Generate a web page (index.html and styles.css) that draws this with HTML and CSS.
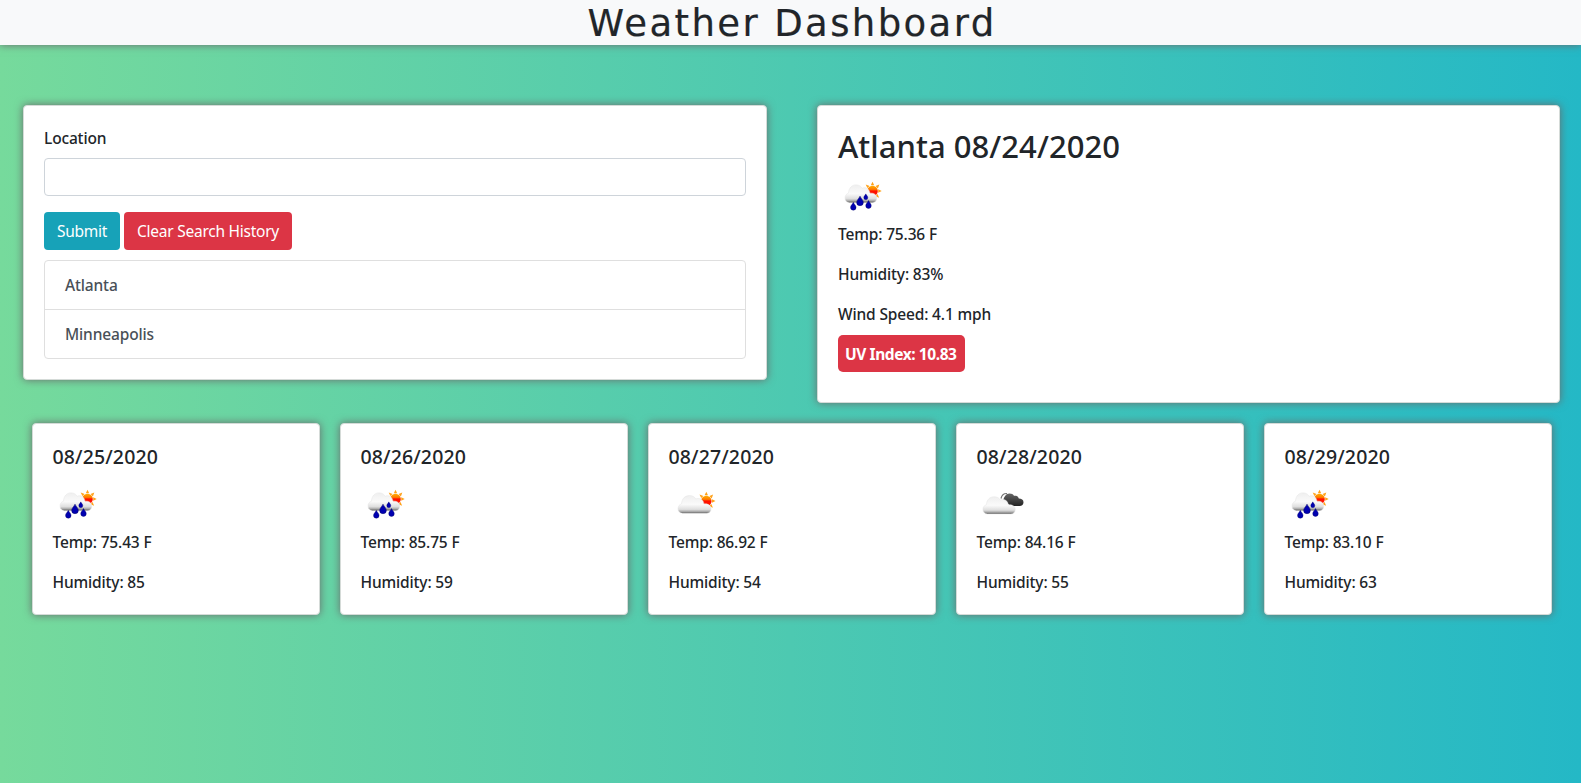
FILE: index.html
```html
<!DOCTYPE html>
<html lang="en">
<head>
<meta charset="utf-8">
<title>Weather Dashboard</title>
<link rel="stylesheet" href="styles.css">
</head>
<body>
<svg class="defs" width="0" height="0" aria-hidden="true">
  <defs>
    <linearGradient id="cloudFill" x1="0" y1="0" x2="0" y2="1">
      <stop offset="0" stop-color="#efefef"/><stop offset=".5" stop-color="#fafafa"/><stop offset=".78" stop-color="#dedede"/><stop offset=".9" stop-color="#aaa"/><stop offset="1" stop-color="#555"/>
    </linearGradient>
    <linearGradient id="darkFill" x1="0" y1="0" x2="0" y2="1">
      <stop offset="0" stop-color="#666"/><stop offset=".5" stop-color="#444"/><stop offset="1" stop-color="#222"/>
    </linearGradient>
    <linearGradient id="sunFill" x1="0" y1="0" x2="0" y2="1">
      <stop offset="0" stop-color="#ffb000"/><stop offset=".35" stop-color="#ff7a00"/><stop offset=".5" stop-color="#ff1000"/><stop offset="1" stop-color="#ff1800"/>
    </linearGradient>
    <g id="sun">
      <path fill="#ffa21a" d="M0-9.200l1.700 3.400h-3.400zM-6.800-6.500l3.900 1.400-2.200 2.200zM6.800-6.500l-1.400 3.900-2.300-2.300zM9.200 0l-3.500 1.800v-3.600zM6.600 6.800l-3.700-1.500 2.200-2.300z"/>
      <circle r="5.300" fill="url(#sunFill)"/>
    </g>
    <path id="cloud" d="M8 29a5 5 0 0 1-4.500-5c0-2.500 1.500-4.300 3.500-4.800C7.500 13.500 10.500 10.500 15 10.500c3 0 5 1.300 6.300 3.500 4-1.500 7.500.5 8.200 5.200 4-.5 7 1.500 7 5 0 3-2 4.800-4.500 4.800z" fill="url(#cloudFill)" stroke="#e4e4e4" stroke-width=".5"/>
    <path id="drop" d="M0-4.200C1-2 2.900-.8 2.900 1.200a2.900 2.900 0 0 1-5.800 0C-2.900-.8-1-2 0-4.200z" fill="#0000b0" stroke="#000060" stroke-width=".4"/>
    <symbol id="rain" viewBox="0 0 50 50">
      <use href="#sun" transform="translate(34.500 18)"/>
      <use href="#cloud" transform="translate(3.700 1.800) scale(.96)"/>
      <use href="#drop" transform="translate(22 28) scale(1.150)"/>
      <use href="#drop" transform="translate(27.800 23.800) scale(.7)"/>
      <use href="#drop" transform="translate(30.500 31.500) scale(.95)"/>
      <use href="#drop" transform="translate(15.300 33.300) scale(.95)"/>
    </symbol>
    <symbol id="partly" viewBox="0 0 50 50">
      <use href="#sun" transform="translate(37.300 20)"/>
      <use href="#cloud" transform="translate(5.500 4.500) scale(1 .96)"/>
    </symbol>
    <symbol id="broken" viewBox="0 0 50 50">
      <path d="M27 21c.3-3 2.500-6.500 6-6.500 2.200 0 3.600.8 4.500 2.300 2.500-.5 4.300.7 4.800 2.700 2.700 0 4.700 1.200 4.700 3.700 0 2-1.500 3.800-4 3.800h-9z" transform="translate(-.5 -2)" fill="url(#darkFill)"/>
      <path d="M24 17.500c.7-3 3-5.200 6-5" fill="none" stroke="#777" stroke-width="1.200"/>
      <use href="#cloud" transform="translate(2.500 6) scale(.98 .93)"/>
    </symbol>
  </defs>
</svg>
<header class="topbar"><h1 class="title">Weather Dashboard</h1></header>
<main>
  <div class="top">
    <section class="card search">
      <label class="label" for="loc">Location</label>
      <input class="field" id="loc" type="text">
      <div class="buttons">
        <button class="btn info">Submit</button>
        <button class="btn danger">Clear Search History</button>
      </div>
      <ul class="history"><li>Atlanta</li><li>Minneapolis</li></ul>
    </section>
    <section class="card current">
      <h2 class="city">Atlanta 08/24/2020</h2>
      <svg class="icon"><use href="#rain"/></svg>
      <p>Temp: 75.36 F</p>
      <p>Humidity: 83%</p>
      <p>Wind Speed: 4.1 mph</p>
      <span class="uv">UV Index: 10.83</span>
    </section>
  </div>
  <div class="forecast">
    <section class="card day"><h3>08/25/2020</h3><svg class="icon"><use href="#rain"/></svg><p>Temp: 75.43 F</p><p>Humidity: 85</p></section>
    <section class="card day"><h3>08/26/2020</h3><svg class="icon"><use href="#rain"/></svg><p>Temp: 85.75 F</p><p>Humidity: 59</p></section>
    <section class="card day"><h3>08/27/2020</h3><svg class="icon"><use href="#partly"/></svg><p>Temp: 86.92 F</p><p>Humidity: 54</p></section>
    <section class="card day"><h3>08/28/2020</h3><svg class="icon"><use href="#broken"/></svg><p>Temp: 84.16 F</p><p>Humidity: 55</p></section>
    <section class="card day"><h3>08/29/2020</h3><svg class="icon"><use href="#rain"/></svg><p>Temp: 83.10 F</p><p>Humidity: 63</p></section>
  </div>
</main>
</body>
</html>
```
FILE: styles.css
```css
* { box-sizing: border-box; }
body {
  margin: 0;
  min-height: 783px;
  font: 500 15.5px/24px "Noto Sans", sans-serif;
  letter-spacing: -0.15px;
  color: #212529;
  background: linear-gradient(to right, #76da9c, #24b8c6);
}
.defs { display: block; height: 0; }
.topbar {
  height: 45px;
  background: #f8f9fa;
  box-shadow: 0 0 8px #6b6b6b;
  text-align: center;
}
.title {
  margin: 0;
  padding-left: 3px;
  font: 400 37px/47px "DejaVu Sans", sans-serif;
  letter-spacing: 2.4px;
  -webkit-text-stroke: .2px #212529;
}
.top {
  display: grid;
  grid-template-columns: 744px 743px;
  column-gap: 50px;
  align-items: start;
  padding: 60px 0 0 23px;
}
.card {
  background: #fff;
  border: 1px solid #d5dbd8;
  border-radius: 4px;
  box-shadow: 0 0 8px #6b6b6b;
  padding: 20px;
}
.search { height: 275px; }
.current { height: 298px; }
.label { display: block; height: 32px; }
.field {
  display: block;
  width: 100%;
  height: 38px;
  border: 1px solid #ced4da;
  border-radius: 4px;
}
.buttons { display: flex; gap: 4px; margin: 16px 0 10px; }
.btn {
  height: 38px;
  padding: 0;
  border: 0;
  border-radius: 4px;
  font: 400 15.5px/38px "Noto Sans", sans-serif;
  letter-spacing: -0.25px;
  color: #fff;
  text-align: center;
  white-space: nowrap;
}
.info { width: 76px; background: #17a2b8; }
.danger { width: 168px; background: #dc3545; }
.history {
  margin: 0;
  padding: 0;
  list-style: none;
  border: 1px solid #dfdfdf;
  border-radius: 4px;
  color: #495057;
}
.history li { height: 48px; padding: 12px 20px; }
.history li + li { height: 49px; border-top: 1px solid #dfdfdf; }
.city { margin: 0 0 10px; font-size: 31px; line-height: 40px; font-weight: 500; letter-spacing: .05px; }
.icon { display: block; width: 50px; height: 50px; }
.current .icon { margin: -3px 0 -1px; }
p { margin: 0 0 16px; }
.current p:last-of-type { margin-bottom: 9px; }
.uv {
  display: inline-block;
  width: 127px;
  height: 37px;
  padding: 0 7px;
  border-radius: 5px;
  background: #dc3545;
  color: #fff;
  font-weight: 700;
  line-height: 38px;
  letter-spacing: -0.42px;
  white-space: nowrap;
}
.forecast {
  display: grid;
  grid-template-columns: repeat(5, 288px);
  column-gap: 20px;
  padding: 20px 0 0 32px;
}
.day { height: 192px; padding-left: 19.5px; }
.day h3 { margin: 0; font-size: 19.5px; line-height: 26px; font-weight: 500; letter-spacing: .12px; }
.day .icon { margin: 11px 0 -1px; }
```
